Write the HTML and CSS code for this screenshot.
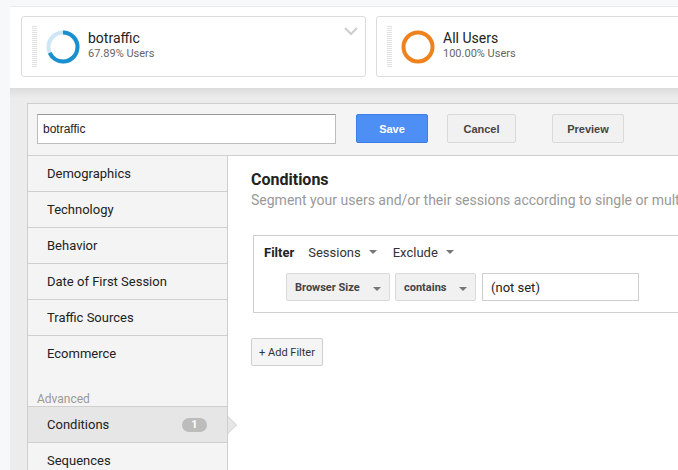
FILE: index.html
```html
<!DOCTYPE html>
<html lang="en">
<head>
  <meta charset="UTF-8" />
  <title>Segment editor</title>
  <link rel="stylesheet" href="styles.css">
</head>
<body>
  <div class="page">
    <!-- segment cards -->
    <div class="segments">
      <div class="segment-card">
        <div class="handle"></div>
        <svg class="donut" width="36" height="36" viewBox="0 0 36 36">
          <circle cx="18" cy="18" r="14.5" fill="none" stroke="#cfe7f5" stroke-width="4"/>
          <circle cx="18" cy="18" r="14.5" fill="none" stroke="#1a8fcd" stroke-width="4"
            stroke-dasharray="61.85 91.1" transform="rotate(-90 18 18)"/>
        </svg>
        <div class="segment-text">
          <div class="segment-name">botraffic</div>
          <div class="segment-share">67.89% Users</div>
        </div>
        <svg class="chevron" width="14" height="9" viewBox="0 0 14 9">
          <path d="M1 1 L7 7 L13 1" fill="none" stroke="#cfcfcf" stroke-width="2.2"/>
        </svg>
      </div>
      <div class="segment-card wide">
        <div class="handle"></div>
        <svg class="donut" width="36" height="36" viewBox="0 0 36 36">
          <circle cx="18" cy="18" r="14.5" fill="none" stroke="#f0821e" stroke-width="4"/>
        </svg>
        <div class="segment-text">
          <div class="segment-name">All Users</div>
          <div class="segment-share">100.00% Users</div>
        </div>
      </div>
    </div>

    <!-- editor -->
    <div class="workspace">
      <div class="editor">
        <div class="toolbar">
          <input class="name-input" type="text" value="botraffic">
          <button class="btn btn-primary">Save</button>
          <button class="btn">Cancel</button>
          <button class="btn btn-preview">Preview</button>
        </div>
        <div class="editor-body">
          <ul class="sidebar">
            <li class="side-item">Demographics</li>
            <li class="side-item">Technology</li>
            <li class="side-item">Behavior</li>
            <li class="side-item">Date of First Session</li>
            <li class="side-item">Traffic Sources</li>
            <li class="side-item last">Ecommerce</li>
            <li class="side-label">Advanced</li>
            <li class="side-item active">Conditions <span class="badge">1</span></li>
            <li class="side-item">Sequences</li>
          </ul>
          <div class="content">
            <h2 class="content-title">Conditions</h2>
            <p class="content-sub">Segment your users and/or their sessions according to single or multi-session conditions.</p>

            <div class="filter-box">
              <div class="filter-head">
                <span class="filter-label">Filter</span>
                <span class="drop">Sessions <i class="caret"></i></span>
                <span class="drop">Exclude <i class="caret"></i></span>
              </div>
              <div class="filter-row">
                <div class="select sel-dim">Browser Size <i class="caret"></i></div>
                <div class="select sel-op">contains <i class="caret"></i></div>
                <input class="value-input" type="text" value="(not set)">
              </div>
            </div>

            <button class="add-filter">+ Add Filter</button>
          </div>
        </div>
      </div>
    </div>
  </div>
</body>
</html>
```

FILE: styles.css
```css
body {
  margin: 0;
  padding: 0;
  background: #f7f8fa;
  font-family: Roboto, "Liberation Sans", sans-serif;
  color: #222;
  overflow: hidden;
}

.page {
  padding: 6px 0 0 10px;
  height: 464px;
}

/* segment cards */
.segments {
  display: flex;
  gap: 10px;
  background: #fff;
  padding: 9px 0 11px 11px;
  border-top: 1px solid #e9eaec;
  white-space: nowrap;
  overflow: hidden;
}

.segment-card {
  flex: 0 0 343px;
  height: 59px;
  border: 1px solid #dcdcdc;
  border-radius: 3px;
  display: flex;
  align-items: center;
  position: relative;
  background: #fff;
}
.segment-card.wide {
  flex: 0 0 400px;
}

.handle {
  width: 5px;
  height: 42px;
  margin-left: 10px;
  background: repeating-linear-gradient(to bottom, #e0e0e0 0, #e0e0e0 1px, transparent 1px, transparent 2px);
}

.donut {
  margin-left: 8px;
}

.segment-text {
  margin-left: 7px;
  margin-top: -4px;
}
.segment-name {
  font-size: 14px;
  color: #222;
  line-height: 18px;
}
.segment-share {
  font-size: 11px;
  color: #666;
  line-height: 14px;
}

.chevron {
  position: absolute;
  top: 10px;
  right: 7px;
}

/* workspace */
.workspace {
  background: linear-gradient(to bottom, #dcdcdc 0, #ececec 10px, #ececec 100%);
  padding: 15px 0 0 17px;
  height: 100%;
}

.editor {
  border: 1px solid #cfcfcf;
  border-right: none;
  background: #f4f4f4;
  height: 100%;
}

.toolbar {
  display: flex;
  align-items: flex-start;
  padding: 10px 0 10px 9px;
  border-bottom: 1px solid #cfcfcf;
  height: 31px;
}

.name-input {
  width: 299px;
  height: 30px;
  box-sizing: border-box;
  border: 1px solid #bdbdbd;
  border-top-color: #999;
  padding: 0 5px;
  font-family: "Liberation Sans", Arial, sans-serif;
  font-size: 12px;
  color: #222;
  margin: 0 20px 0 0;
}

.btn {
  font-family: "Liberation Sans", Arial, sans-serif;
  font-weight: bold;
  font-size: 11px;
  color: #444;
  background: #f1f1f1;
  border: 1px solid #d9d9d9;
  border-radius: 2px;
  height: 29px;
  width: 69px;
  margin-right: 19px;
  padding: 0;
}
.btn-primary {
  background: #4d8ff5;
  border-color: #3a7ee8;
  color: #fff;
  width: 72px;
}
.btn-preview {
  width: 72px;
  margin-left: 17px;
}

.editor-body {
  display: flex;
  height: 100%;
}

/* sidebar */
.sidebar {
  list-style: none;
  margin: 0;
  padding: 0;
  width: 199px;
  border-right: 1px solid #cfcfcf;
  background: #f4f4f4;
  flex-shrink: 0;
}
.side-item {
  height: 35px;
  line-height: 35px;
  border-bottom: 1px solid #cfcfcf;
  padding-left: 19px;
  font-size: 13px;
  color: #222;
  position: relative;
}
.side-item.last {
  border-bottom: none;
}
.side-label {
  height: 36px;
  padding-left: 9px;
  font-size: 12px;
  color: #999;
  line-height: 14px;
  display: flex;
  align-items: flex-end;
  border-bottom: 1px solid #cfcfcf;
  box-sizing: border-box;
}
.side-item.active {
  background: #e6e6e6;
}
.side-item.active::after {
  content: "";
  position: absolute;
  right: -10px;
  top: 9px;
  width: 0;
  height: 0;
  border-top: 9px solid transparent;
  border-bottom: 9px solid transparent;
  border-left: 9px solid #cfcfcf;
}
.side-item.active::before {
  content: "";
  position: absolute;
  right: -9px;
  top: 10px;
  width: 0;
  height: 0;
  border-top: 8px solid transparent;
  border-bottom: 8px solid transparent;
  border-left: 8px solid #e6e6e6;
  z-index: 2;
}

.badge {
  position: absolute;
  right: 20px;
  top: 11px;
  width: 25px;
  height: 14px;
  line-height: 14px;
  border-radius: 7px;
  background: #bcbcbc;
  color: #fff;
  font-size: 11px;
  font-weight: bold;
  text-align: center;
}

/* content */
.content {
  flex: 1;
  background: #fff;
  padding: 14px 0 0 23px;
  white-space: nowrap;
  overflow: hidden;
}

.content-title {
  margin: 0;
  font-size: 16px;
  font-weight: bold;
  color: #222;
  line-height: 20px;
}
.content-sub {
  margin: 0;
  font-size: 14px;
  color: #999;
  line-height: 20px;
}

.filter-box {
  margin: 25px 0 0 2px;
  border: 1px solid #cfcfcf;
  border-right: none;
  height: 78px;
  box-sizing: border-box;
  padding: 7px 0 0 10px;
}

.filter-head {
  display: flex;
  align-items: center;
  font-size: 13px;
  height: 18px;
}
.filter-label {
  font-weight: bold;
  margin-right: 14px;
}
.drop {
  color: #333;
  margin-right: 16px;
  display: flex;
  align-items: center;
}

.caret {
  display: inline-block;
  width: 0;
  height: 0;
  border-left: 4px solid transparent;
  border-right: 4px solid transparent;
  border-top: 4px solid #777;
  margin-left: 8px;
}

.filter-row {
  display: flex;
  gap: 5px;
  margin: 12px 0 0 22px;
}

.select {
  height: 28px;
  box-sizing: border-box;
  background: #f1f1f1;
  border: 1px solid #d9d9d9;
  border-radius: 2px;
  font-size: 11px;
  font-weight: bold;
  color: #444;
  display: flex;
  align-items: center;
  padding: 0 8px 0 8px;
  justify-content: space-between;
}
.sel-dim {
  width: 104px;
}
.sel-op {
  width: 81px;
}
.select .caret {
  margin-top: 3px;
}

.value-input {
  width: 157px;
  height: 28px;
  box-sizing: border-box;
  border: 1px solid #cfcfcf;
  font-family: Roboto, sans-serif;
  font-size: 13px;
  color: #222;
  padding: 0 8px;
  margin: 0 0 0 1px;
}

.add-filter {
  margin-top: 25px;
  height: 28px;
  width: 72px;
  padding: 0;
  font-family: Roboto, sans-serif;
  font-size: 11px;
  color: #333;
  background: #f5f5f5;
  border: 1px solid #cfcfcf;
  border-radius: 2px;
}
```
